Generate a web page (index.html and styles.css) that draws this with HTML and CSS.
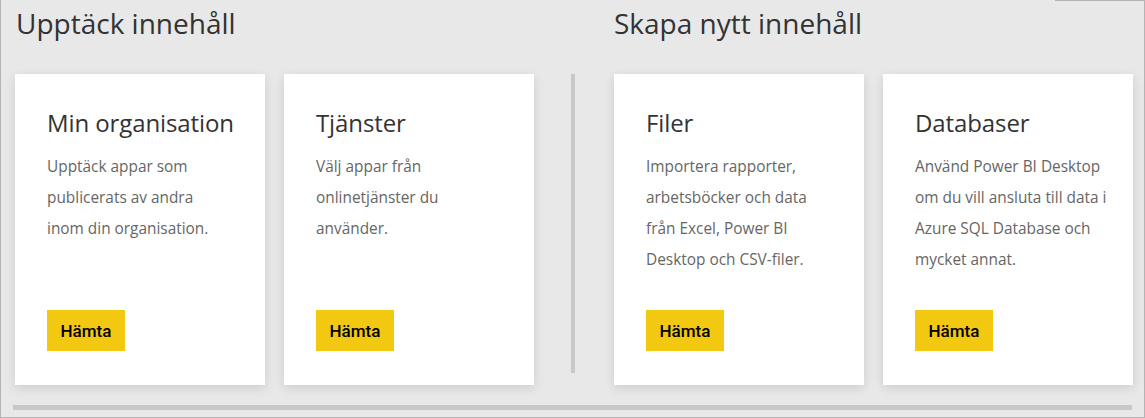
FILE: index.html
```html
<!DOCTYPE html>
<html lang="sv">
<head>
<meta charset="utf-8">
<title>Hämta data</title>
<link rel="stylesheet" href="styles.css">
</head>
<body>
<div class="frame">
  <div class="topline"></div>
  <div class="content">
    <section class="group">
      <h2 class="group-title">Upptäck innehåll</h2>
      <div class="cards">
        <div class="card">
          <h3 class="card-title">Min organisation</h3>
          <p class="card-text">Upptäck appar som<br>publicerats av andra<br>inom din organisation.</p>
          <button class="btn">Hämta</button>
        </div>
        <div class="card">
          <h3 class="card-title">Tjänster</h3>
          <p class="card-text">Välj appar från<br>onlinetjänster du<br>använder.</p>
          <button class="btn">Hämta</button>
        </div>
      </div>
    </section>
    <div class="divider"></div>
    <section class="group">
      <h2 class="group-title group-title--second">Skapa nytt innehåll</h2>
      <div class="cards">
        <div class="card">
          <h3 class="card-title">Filer</h3>
          <p class="card-text">Importera rapporter,<br>arbetsböcker och data<br>från Excel, Power BI<br>Desktop och CSV-filer.</p>
          <button class="btn">Hämta</button>
        </div>
        <div class="card">
          <h3 class="card-title">Databaser</h3>
          <p class="card-text">Använd Power BI Desktop<br>om du vill ansluta till data i<br>Azure SQL Database och<br>mycket annat.</p>
          <button class="btn">Hämta</button>
        </div>
      </div>
    </section>
  </div>
  <div class="scrollbar"></div>
</div>
</body>
</html>
```

FILE: styles.css
```css
* { box-sizing: border-box; }
html, body {
  margin: 0;
  padding: 0;
  background: #e8e8e8;
}
.frame {
  position: relative;
  width: 1145px;
  height: 418px;
  background: #e8e8e8;
  border-left: 1px solid #b4b4b4;
  border-right: 1px solid #b4b4b4;
  border-bottom: 1px solid #b4b4b4;
  font-family: "Open Sans", "Noto Sans", sans-serif;
  overflow: hidden;
}
.topline {
  position: absolute;
  top: 0;
  right: 0;
  width: 89px;
  height: 1px;
  background: #b4b4b4;
}
.content {
  display: flex;
  padding-left: 14px;
  height: 386px;
}
.group {
  display: flex;
  flex-direction: column;
}
.group-title {
  margin: 0;
  padding-left: 1px;
  height: 74px;
  padding-top: 4px;
  font-size: 28px;
  font-weight: 400;
  line-height: 38px;
  color: #333;
  white-space: nowrap;
}
.group-title--second {
  padding-left: 0;
}
.cards {
  display: flex;
  gap: 19px;
}
.card {
  width: 250px;
  height: 311px;
  background: #fff;
  box-shadow: 0 3px 10px rgba(0, 0, 0, 0.12);
  padding: 33px 16px 34px 32px;
  display: flex;
  flex-direction: column;
  align-items: flex-start;
}
.card-title {
  margin: 0;
  font-size: 24px;
  font-weight: 400;
  line-height: 32px;
  color: #333;
  letter-spacing: -0.1px;
  white-space: nowrap;
}
.card-text {
  margin: 12px 0 0;
  font-size: 15.4px;
  line-height: 31px;
  color: #666;
  white-space: nowrap;
}
.btn {
  margin-top: auto;
  width: 78px;
  height: 41px;
  border: 0;
  padding: 0;
  background: #f2c811;
  color: #000;
  font-family: Roboto, "Liberation Sans", sans-serif;
  font-size: 17px;
  font-weight: 500;
}
.divider {
  width: 4px;
  height: 299px;
  margin: 74px 39px 0 37px;
  background: #c8c8c8;
}
.scrollbar {
  margin-left: 12px;
  width: 1119px;
  height: 5px;
  margin-top: 19px;
  background: #c8c8c8;
}
```
